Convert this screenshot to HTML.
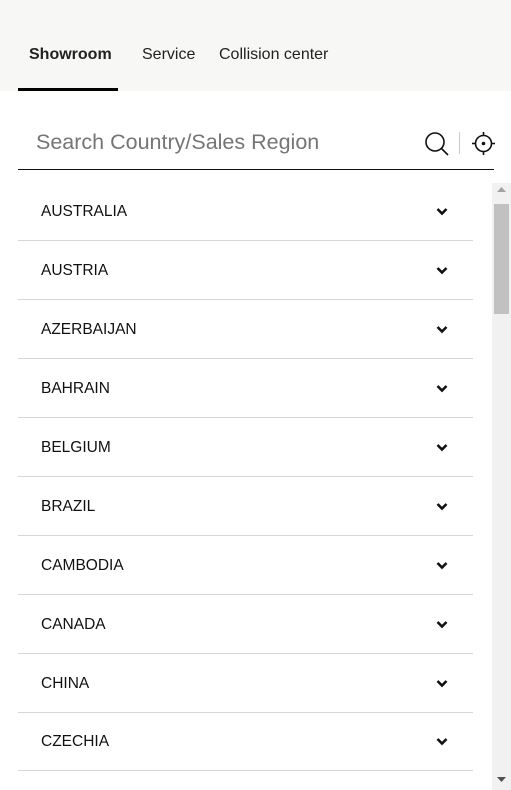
<!DOCTYPE html>
<html><head><style>
*{margin:0;padding:0;box-sizing:border-box}
body{width:511px;height:790px;overflow:hidden;background:#fff;font-family:"Liberation Sans",Arial,sans-serif;position:relative}
.top{position:absolute;left:0;top:0;width:511px;height:91px;background:#f7f7f5}
.tab{position:absolute;top:46px;font-size:16px;color:#222}
.ul{position:absolute;left:18px;top:88px;width:100px;height:3px;background:#000}
.search{position:absolute;left:36px;top:130px;font-size:21.5px;color:#757575}
.line{position:absolute;left:18px;top:169px;width:476px;height:1px;background:#111}
.row{position:absolute;left:18px;width:455px;height:59px;border-bottom:1px solid #d6d6d6}
.row span{position:absolute;left:23px;top:21px;font-size:15.5px;color:#111}
.row svg{position:absolute;left:418px;top:25px}
.sb{position:absolute;left:492px;top:183px;width:19px;height:607px;background:#f1f1f1}
.th{position:absolute;left:494px;top:204px;width:15px;height:110px;background:#c1c1c1}
</style></head><body>
<div class="top">
<div class="tab" style="left:29px;font-weight:bold">Showroom</div>
<div class="tab" style="left:142px">Service</div>
<div class="tab" style="left:219px">Collision center</div>
<div class="ul"></div>
</div>
<div class="search">Search Country/Sales Region</div>
<svg style="position:absolute;left:424px;top:131px" width="26" height="26" viewBox="0 0 26 26"><circle cx="11" cy="11" r="9" fill="none" stroke="#111" stroke-width="1.6"/><line x1="17.5" y1="17.5" x2="24" y2="24" stroke="#111" stroke-width="1.6"/></svg>
<div style="position:absolute;left:459px;top:132px;width:1px;height:22px;background:#ccc"></div>
<svg style="position:absolute;left:472px;top:132px" width="23" height="23" viewBox="0 0 23 23"><circle cx="11.5" cy="11.5" r="8" fill="none" stroke="#111" stroke-width="1.6"/><circle cx="11.5" cy="11.5" r="1.8" fill="#111"/><line x1="11.5" y1="0" x2="11.5" y2="4" stroke="#111" stroke-width="1.6"/><line x1="11.5" y1="19" x2="11.5" y2="23" stroke="#111" stroke-width="1.6"/><line x1="0" y1="11.5" x2="4" y2="11.5" stroke="#111" stroke-width="1.6"/><line x1="19" y1="11.5" x2="23" y2="11.5" stroke="#111" stroke-width="1.6"/></svg>
<div class="line"></div>
<div class="row" style="top:182px"><span>AUSTRALIA</span><svg width="12" height="9" viewBox="0 0 12 9"><path d="M1.5 2 L6 6.5 L10.5 2" fill="none" stroke="#111" stroke-width="2.6"/></svg></div>
<div class="row" style="top:241px"><span>AUSTRIA</span><svg width="12" height="9" viewBox="0 0 12 9"><path d="M1.5 2 L6 6.5 L10.5 2" fill="none" stroke="#111" stroke-width="2.6"/></svg></div>
<div class="row" style="top:300px"><span>AZERBAIJAN</span><svg width="12" height="9" viewBox="0 0 12 9"><path d="M1.5 2 L6 6.5 L10.5 2" fill="none" stroke="#111" stroke-width="2.6"/></svg></div>
<div class="row" style="top:359px"><span>BAHRAIN</span><svg width="12" height="9" viewBox="0 0 12 9"><path d="M1.5 2 L6 6.5 L10.5 2" fill="none" stroke="#111" stroke-width="2.6"/></svg></div>
<div class="row" style="top:418px"><span>BELGIUM</span><svg width="12" height="9" viewBox="0 0 12 9"><path d="M1.5 2 L6 6.5 L10.5 2" fill="none" stroke="#111" stroke-width="2.6"/></svg></div>
<div class="row" style="top:477px"><span>BRAZIL</span><svg width="12" height="9" viewBox="0 0 12 9"><path d="M1.5 2 L6 6.5 L10.5 2" fill="none" stroke="#111" stroke-width="2.6"/></svg></div>
<div class="row" style="top:536px"><span>CAMBODIA</span><svg width="12" height="9" viewBox="0 0 12 9"><path d="M1.5 2 L6 6.5 L10.5 2" fill="none" stroke="#111" stroke-width="2.6"/></svg></div>
<div class="row" style="top:595px"><span>CANADA</span><svg width="12" height="9" viewBox="0 0 12 9"><path d="M1.5 2 L6 6.5 L10.5 2" fill="none" stroke="#111" stroke-width="2.6"/></svg></div>
<div class="row" style="top:654px"><span>CHINA</span><svg width="12" height="9" viewBox="0 0 12 9"><path d="M1.5 2 L6 6.5 L10.5 2" fill="none" stroke="#111" stroke-width="2.6"/></svg></div>
<div class="row" style="top:712px"><span>CZECHIA</span><svg width="12" height="9" viewBox="0 0 12 9"><path d="M1.5 2 L6 6.5 L10.5 2" fill="none" stroke="#111" stroke-width="2.6"/></svg></div>
<div class="sb"></div>
<div class="th"></div>
<svg style="position:absolute;left:497px;top:187px" width="9" height="6"><path d="M0 5 L4.5 0 L9 5Z" fill="#a3a3a3"/></svg>
<svg style="position:absolute;left:497px;top:777px" width="9" height="6"><path d="M0 0 L4.5 5 L9 0Z" fill="#505050"/></svg>
</body></html>
